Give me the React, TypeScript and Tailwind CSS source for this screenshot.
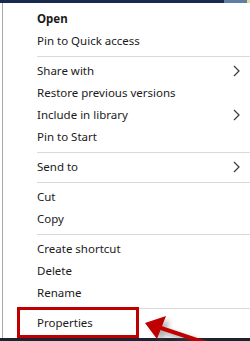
import React from "react";

type Entry = { label?: string; bold?: boolean; sub?: boolean; sep?: boolean };

const entries: Entry[] = [
  { label: "Open", bold: true },
  { label: "Pin to Quick access" },
  { sep: true },
  { label: "Share with", sub: true },
  { label: "Restore previous versions" },
  { label: "Include in library", sub: true },
  { label: "Pin to Start" },
  { sep: true },
  { label: "Send to", sub: true },
  { sep: true },
  { label: "Cut" },
  { label: "Copy" },
  { sep: true },
  { label: "Create shortcut" },
  { label: "Delete" },
  { label: "Rename" },
  { sep: true },
  { label: "Properties" },
];

const Chevron = () => (
  <svg width="7" height="12" viewBox="0 0 7 12" className="mr-[10px]">
    <polyline points="1,1 6,6 1,11" fill="none" stroke="#3a3a3a" strokeWidth="1.2" />
  </svg>
);

export default function App() {
  return (
    <div
      className="relative w-[250px] h-[341px] bg-white overflow-hidden flex flex-col"
      style={{ fontFamily: '"Noto Sans", "Open Sans", sans-serif' }}
    >
      <div className="h-[3px] flex shrink-0">
        <div className="flex-1 bg-[#182b4d]" />
        <div className="w-[23px] bg-[#5f7ca3]" />
        <div className="w-[3px] bg-[#e8d9a0]" />
      </div>
      <div className="flex-1 flex">
        <div className="w-[2px]" />
        <div className="w-px bg-[#a8a8a8]" />
        <div className="flex-1 flex flex-col pt-[5px]">
          {entries.map((e, i) =>
            e.sep ? (
              <div key={i} className="h-[8px] flex items-center pl-[34px]">
                <div className="h-px w-full bg-[#d9d9d9]" />
              </div>
            ) : (
              <div
                key={i}
                className={`h-[22px] flex items-center justify-between pl-[34px] text-[11.5px] text-[#1a1a1a] ${
                  e.bold ? "font-bold" : ""
                }`}
              >
                <span>{e.label}</span>
                {e.sub && <Chevron />}
              </div>
            )
          )}
        </div>
      </div>
      <div className="h-[3px] shrink-0 bg-[#1c2230]" />

      <div className="absolute left-[17px] top-[307px] w-[122px] h-[31px] border-[3px] border-[#c00000]" />

      <svg className="absolute left-0 top-0" width="250" height="341" viewBox="0 0 250 341">
        <defs>
          <filter id="sh" x="-50%" y="-50%" width="200%" height="200%">
            <feGaussianBlur stdDeviation="2.5" />
          </filter>
        </defs>
        <g filter="url(#sh)" opacity="0.45">
          <polygon points="150,327 170,320 162,342" fill="#555" />
          <line x1="165" y1="332" x2="215" y2="348" stroke="#555" strokeWidth="5" />
        </g>
        <line x1="158" y1="327" x2="212" y2="345" stroke="#c00000" strokeWidth="4" />
        <polygon points="145,323 166,316 157,339" fill="#c00000" />
      </svg>
    </div>
  );
}
